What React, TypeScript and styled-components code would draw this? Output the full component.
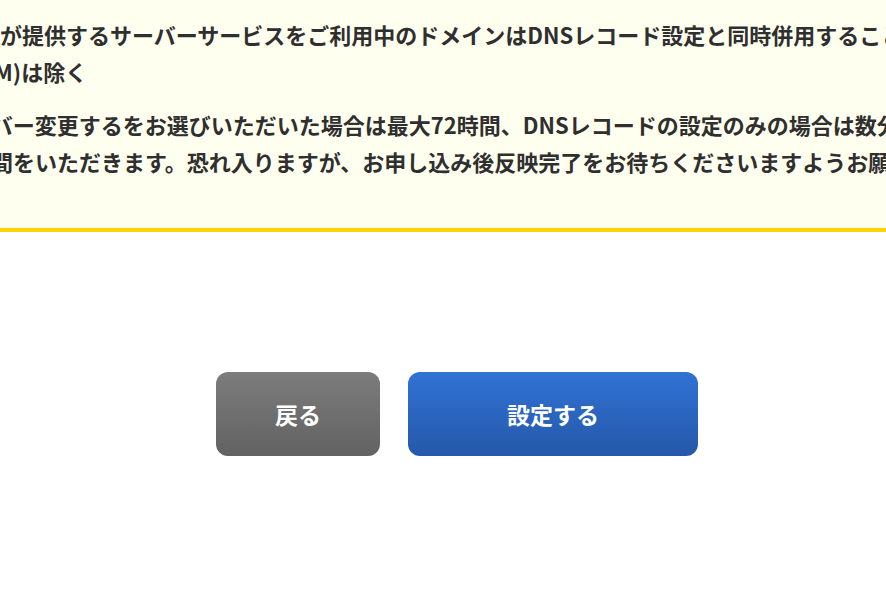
import React from 'react'
import styled, { createGlobalStyle } from 'styled-components'

const GlobalStyle = createGlobalStyle`
  html, body {
    margin: 0;
    padding: 0;
    background: #ffffff;
    overflow: hidden;
  }
  body {
    font-family: "Noto Sans CJK JP", "Noto Sans", sans-serif;
    color: #333333;
  }
`

const Page = styled.div`
  width: 886px;
  min-height: 592px;
  overflow: hidden;
`

const Notice = styled.div`
  background: #fffff0;
  border-bottom: 4px solid #ffd200;
  padding: 16px 0 48px 0;
`

const NoticeText = styled.p<{ indent: number }>`
  margin: 0 0 16px 0;
  margin-left: ${({ indent }) => -indent}px;
  font-size: 22px;
  line-height: 37px;
  font-weight: 700;
  color: #2f2f2f;
  white-space: nowrap;

  &:last-child {
    margin-bottom: 0;
  }
`

const ButtonRow = styled.div`
  display: flex;
  justify-content: center;
  gap: 28px;
  padding: 140px 0 0 28px;
`

const ActionButton = styled.button<{ variant: 'back' | 'primary' }>`
  width: ${({ variant }) => (variant === 'back' ? 164 : 290)}px;
  height: 84px;
  border: 0;
  border-radius: 12px;
  cursor: pointer;
  font-family: "Noto Sans CJK JP", "Noto Sans", sans-serif;
  font-size: 23px;
  font-weight: 700;
  color: #ffffff;
  background: ${({ variant }) =>
    variant === 'back'
      ? 'linear-gradient(to bottom, #7c7c7c, #626262)'
      : 'linear-gradient(to bottom, #3172d4, #2558a9)'};

  :hover {
    opacity: 0.9;
  }
`

export default function App() {
  return (
    <>
      <GlobalStyle />
      <Page>
        <Notice>
          <NoticeText indent={44}>
            当社が提供するサーバーサービスをご利用中のドメインはDNSレコード設定と同時併用することはできません
            <br />
            DKIM)は除く
          </NoticeText>
          <NoticeText indent={53}>
            サーバー変更するをお選びいただいた場合は最大72時間、DNSレコードの設定のみの場合は数分から
            <br />
            数時間をいただきます。恐れ入りますが、お申し込み後反映完了をお待ちくださいますようお願いいたします。
          </NoticeText>
        </Notice>
        <ButtonRow>
          <ActionButton variant="back">戻る</ActionButton>
          <ActionButton variant="primary">設定する</ActionButton>
        </ButtonRow>
      </Page>
    </>
  )
}
